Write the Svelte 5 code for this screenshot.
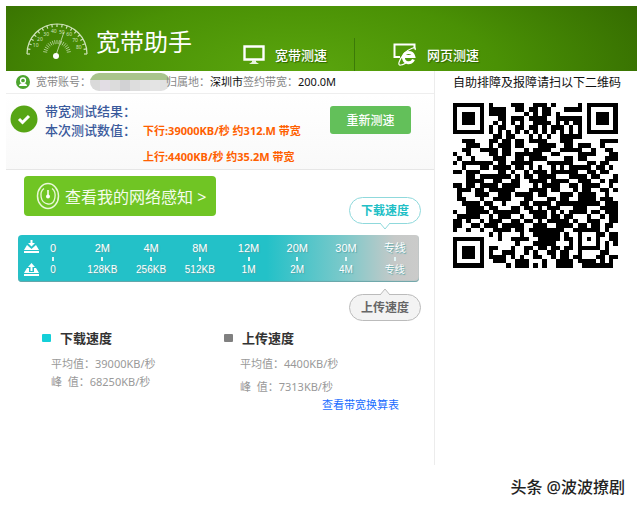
<script>
  const scale = [
    { down: "0", up: "0" },
    { down: "2M", up: "128KB" },
    { down: "4M", up: "256KB" },
    { down: "8M", up: "512KB" },
    { down: "12M", up: "1M" },
    { down: "20M", up: "2M" },
    { down: "30M", up: "4M" },
    { down: "专线", up: "专线" },
  ];

  const mosaic = ["#dadada", "#e2dde4", "#dcdcdc", "#d2d2d4", "#dddddd", "#e2e2e2", "#e4e4e4", "#e1e1e1"];

  const gaugeTicks = Array.from({ length: 19 }, (_, i) => i * 10);
  const innerTicks = Array.from({ length: 17 }, (_, i) => 10 + i * 10);
  const gaugeNumbers = [10, 20, 30, 40, 50, 60, 70, 80];

  function polar(deg, r) {
    const a = (deg * Math.PI) / 180;
    return [32 - Math.cos(a) * r, 32 - Math.sin(a) * r];
  }

  const qrRows = [
    "1111111010000111001110100000101111111",
    "1000001011110011011011000111101000001",
    "1011101011110000101011010000001011101",
    "1011101000110111011110011111101011101",
    "1011101001010101001111010101101011101",
    "1000001010110011011010111010101000001",
    "1111111010101010101010101010101111111",
    "0000000001101100010101001111100000000",
    "0011100011011011011110001110000001111",
    "0001110010111011000111100110111001000",
    "0011001111011000101111001111100100110",
    "1001000011011011111100110000111100011",
    "0100100001110011011110000110110000111",
    "1011111110110111110001111110001101100",
    "0010001101111011010100101011111011010",
    "1101110000110100101110111111001101100",
    "0001101111111010110111100011110110001",
    "0001111001100110011110111100111001011",
    "1101101111011110001011110011011110010",
    "0111011011111100011110110001011001101",
    "0100011100111011110110001110111100100",
    "0110001001111000110001101100111101110",
    "0011110110010001101111011111111110111",
    "0001111011000110110101110001110001111",
    "1001111101111110011110101011110110111",
    "0111110010111001001110110110001001011",
    "1101001011100110110101111101001110011",
    "1100110111011111001110011110110110110",
    "1001001001111011011111111001111110100",
    "0000000010100001001111110100100011011",
    "1111111000100111100111110110101010011",
    "1000001000000010001111100010100010101",
    "1011101011000100110110110110111110100",
    "1011101010011100101001101100100001100",
    "1011101011110101001100101101100011011",
    "1000001001110011100010011110111101010",
    "1111111000001011101010011110011111110",
  ];
  const qrPath = qrRows
    .map((row, y) => [...row].map((c, x) => (c === "1" ? `M${x} ${y}h1v1h-1z` : "")).join(""))
    .join("");
</script>

<div class="page">
  <header>
    <svg class="gauge" viewBox="0 0 64 38" aria-hidden="true">
      <path d="M2 32A30 30 0 0 1 62 32" fill="none" stroke="#cfe3bb" stroke-width="1.2" />
      {#each gaugeTicks as deg}
        {@const a = polar(deg, 30)}
        {@const b = polar(deg, 27)}
        <line x1={a[0]} y1={a[1]} x2={b[0]} y2={b[1]} stroke="#cfe3bb" stroke-width="1.2" />
      {/each}
      {#each innerTicks as deg}
        {@const a = polar(deg, 14)}
        {@const b = polar(deg, 10)}
        <line x1={a[0]} y1={a[1]} x2={b[0]} y2={b[1]} stroke="#c3dbad" stroke-width="0.8" />
      {/each}
      {#each gaugeNumbers as n}
        {@const p = polar(n * 2 + 2, 23)}
        <text x={p[0]} y={p[1] + 2} text-anchor="middle" font-size="5" fill="#cfe3bb">{n}</text>
      {/each}
      <path d="M31 33L39 10" stroke="#cfe3bb" stroke-width="0.8" />
      <circle cx="31" cy="34" r="3" fill="#fff" />
    </svg>
    <h1>宽带助手</h1>
    <nav>
      <a href="#broadband">
        <svg width="22" height="20" viewBox="0 0 22 20" aria-hidden="true">
          <path d="M1.5 1.5h19v13h-19z" fill="none" stroke="#fff" stroke-width="2.4" />
          <path d="M9 15h4v2l3 2H6l3-2z" fill="#e8f3df" />
        </svg>
        宽带测速
      </a>
      <a href="#web">
        <svg width="24" height="23" viewBox="0 0 24 23" aria-hidden="true">
          <path d="M7 14H1.500V1.500h20V5" fill="none" stroke="#fff" stroke-width="2" />
          <path d="M20.500 13.500H10.500a5.300 5.300 0 0 1 10.300 0zM10.500 14a5.200 5.200 0 0 0 10 2.500" fill="none" stroke="#fff" stroke-width="3" />
          <path d="M22 7c2-4-6-2-11 4S4 23 8 22c2 0 3-1 5-2" fill="none" stroke="#fff" stroke-width="1.200" />
        </svg>
        网页测速
      </a>
    </nav>
  </header>

  <div class="body">
    <main>
      <div class="account">
        <svg width="14" height="14" viewBox="0 0 14 14" aria-hidden="true">
          <circle cx="7" cy="7" r="7" fill="#4da52f" />
          <circle cx="7" cy="5.500" r="2.500" fill="none" stroke="#fff" stroke-width="1.300" />
          <path d="M3 11c0-2 2-3 4-3s4 1 4 3z" fill="#fff" />
        </svg>
        <span class="label">宽带账号：</span>
        <svg class="mask" width="80" height="18" viewBox="0 0 80 18" aria-hidden="true">
          <clipPath id="pill"><rect width="80" height="18" rx="9" /></clipPath>
          <g clip-path="url(#pill)">
            {#each mosaic as color, i}
              <rect x={i * 10} y="6" width="10" height="12" fill={color} />
            {/each}
            <rect width="80" height="7" fill="#a9c48c" />
          </g>
        </svg>
        <span class="label">归属地：</span>
        <span>深圳市</span>
        <span class="label">签约带宽：</span>
        <span>200.0M</span>
      </div>

      <section class="result">
        <svg width="28" height="28" viewBox="0 0 28 28" aria-hidden="true">
          <circle cx="14" cy="14" r="13.500" fill="#57a515" />
          <path d="M9 14l3.500 3.500L19 11" fill="none" stroke="#fff" stroke-width="3" />
        </svg>
        <div class="titles">
          <p>带宽测试结果：</p>
          <p>本次测试数值：</p>
        </div>
        <div class="values">
          <p>下行:39000KB/秒 约312.M 带宽</p>
          <p>上行:4400KB/秒 约35.2M 带宽</p>
        </div>
        <button class="retest">重新测速</button>
      </section>

      <section class="speed">
        <div class="top">
          <button class="network">
            <svg width="24" height="28" viewBox="0 0 24 28" aria-hidden="true">
              <ellipse cx="12" cy="14" rx="10.500" ry="12.500" fill="none" stroke="#e9f8d9" stroke-width="1.500" />
              <path d="M8 6.500C3 10 4 21 12 22S21 10 16 6.500" fill="none" stroke="#e9f8d9" stroke-width="1.300" />
              <path d="M12 8v6" stroke="#fff" stroke-width="1.500" />
              <circle cx="12" cy="14.500" r="2" fill="#fff" />
            </svg>
            查看我的网络感知 &gt;
          </button>
          <div class="bubble down">
            <span>下载速度</span>
            <svg width="10" height="7" viewBox="0 0 10 7" aria-hidden="true">
              <path d="M0 0L5 6L10 0" fill="#fff" stroke="#8fd9dc" />
            </svg>
          </div>
        </div>

        <div class="bar">
          <div class="icons">
            <svg width="15" height="13" viewBox="0 0 15 13" aria-hidden="true">
              <path d="M6.500 0h2v3H11L7.500 6.500 4 3h2.500zM3 5L0 10h15L12 5l-4.500 4zM0 11h15v2H0z" fill="#fff" />
            </svg>
            <svg width="15" height="13" viewBox="0 0 15 13" aria-hidden="true">
              <path d="M7.500 0L11 4H8.500v4h-2V4H4zM3 5L0 10h15l-3-5h-2v4H5V5zM0 11h15v2H0z" fill="#fff" />
            </svg>
          </div>
          {#each scale as step}
            <div class="step">
              <span>{step.down}</span>
              <i></i>
              <span class="rate">{step.up}</span>
            </div>
          {/each}
        </div>

        <div class="bubble up">
          <svg width="10" height="7" viewBox="0 0 10 7" aria-hidden="true">
            <path d="M0 7L5 1L10 7" fill="#f3f3f3" stroke="#bbb" />
          </svg>
          <span>上传速度</span>
        </div>
      </section>

      <section class="stats">
        <div class="stat">
          <h2>下载速度</h2>
          <p>平均值：39000KB/秒</p>
          <p>峰&nbsp; 值：68250KB/秒</p>
        </div>
        <div class="stat upload">
          <h2>上传速度</h2>
          <p>平均值：4400KB/秒</p>
          <p>峰&nbsp; 值：7313KB/秒</p>
          <a href="#table">查看带宽换算表</a>
        </div>
      </section>
    </main>

    <aside>
      <p>自助排障及报障请扫以下二维码</p>
      <svg class="qr" viewBox="0 0 37 37" role="img" aria-label="二维码">
        <path d={qrPath} shape-rendering="crispEdges" />
      </svg>
    </aside>
  </div>

  <footer>头条 @波波撩剧</footer>
</div>

<style>
  :global(body) {
    background: #fff;
  }

  .page {
    padding: 6px 3px 0 6px;
    font-family: "Noto Sans", "Noto Sans CJK SC", sans-serif;
    font-size: 11px;
    line-height: 18px;
    color: #111;
  }

  h1,
  h2,
  p {
    margin: 0;
  }

  button {
    border: none;
    padding: 0;
    font-family: inherit;
    cursor: pointer;
  }

  header {
    display: flex;
    height: 65px;
    background: radial-gradient(ellipse 64% 240% at 46% 105%, #5ba60e 0%, #4a9105 50%, #326700 100%);
    color: #fff;
  }

  .gauge {
    width: 64px;
    height: 38px;
    margin: 16px 0 0 19px;
  }

  h1 {
    margin: 17px 0 0 7px;
    font-size: 24px;
    font-weight: 400;
    line-height: 38px;
  }

  nav {
    display: flex;
    align-items: flex-end;
    margin-left: 51px;
  }

  nav a {
    display: flex;
    align-items: center;
    gap: 10px;
    height: 33px;
    color: #fff;
    font-size: 13px;
    font-weight: 500;
    text-decoration: none;
    text-shadow: 1px 1px 1px #2d6400;
  }

  nav a + a {
    margin-left: 27px;
    padding-left: 38px;
    border-left: 1px solid #3c7a08;
  }

  .body {
    display: flex;
  }

  main {
    flex: none;
    width: 68%;
    box-sizing: border-box;
    border-right: 1px solid #ececec;
    padding-bottom: 51px;
  }

  .account {
    display: flex;
    align-items: center;
    height: 22px;
    padding-left: 10px;
    border-bottom: 1px solid #eee;
    white-space: nowrap;
  }

  .label {
    color: #888;
  }

  .account > .label:first-of-type {
    width: 54px;
    margin-left: 6px;
  }

  .mask {
    margin-right: -4px;
  }

  .result {
    display: flex;
    height: 75px;
    padding: 0 23px 0 4px;
    border-bottom: 1px solid #e6e6e6;
    background: linear-gradient(#fff, #f9f9f9);
  }

  .result > svg {
    margin-top: 11px;
  }

  .titles {
    width: 98px;
    padding: 8px 0 0 7px;
    color: #3a5a9c;
    font-size: 13px;
    font-weight: 500;
    line-height: 19px;
    white-space: nowrap;
  }

  .values {
    padding-top: 24px;
    color: #ff6000;
    font-weight: 700;
    line-height: 26px;
    white-space: nowrap;
  }

  .retest {
    width: 81px;
    height: 28px;
    margin: 12px 0 0 auto;
    border-radius: 3px;
    background: #63c05a;
    color: #fff;
    font-size: 12px;
    font-weight: 500;
  }

  .speed {
    padding: 6px 15px 0 12px;
  }

  .top {
    display: flex;
    justify-content: space-between;
    align-items: flex-end;
    height: 54px;
    margin-bottom: 5px;
  }

  .network {
    display: flex;
    align-items: center;
    align-self: flex-start;
    gap: 5px;
    height: 40px;
    margin-left: 6px;
    padding: 0 10px 0 12px;
    border-radius: 4px;
    background: #70c524;
    color: #f4fcec;
    font-size: 16px;
  }

  .bubble {
    display: flex;
    flex-direction: column;
    align-items: center;
    width: 72px;
    margin-right: -2px;
    font-size: 12px;
    font-weight: 700;
  }

  .bubble span {
    width: 100%;
    box-sizing: border-box;
    border: 1px solid #8fd9dc;
    border-radius: 14px;
    color: #22bfc6;
    line-height: 25px;
    text-align: center;
  }

  .bubble svg {
    position: relative;
    z-index: 1;
    margin-top: -1px;
  }

  .bar {
    display: grid;
    grid-template-columns: 22px 38px repeat(7, 1fr);
    height: 47px;
    border-radius: 4px;
    background: linear-gradient(to right, #23c1c8 62%, #7fc9ca 82%, #c6c9c8 94%, #cbcbca);
    box-shadow: inset 0 -1px 1px #6aa5a8;
    color: #fff;
    font-family: "Liberation Sans", "Noto Sans CJK SC", sans-serif;
    text-shadow: 1px 1px 1px #55a5a8;
  }

  .icons {
    display: flex;
    flex-direction: column;
    gap: 10px;
    padding: 5px 0 0 6px;
  }

  .step {
    display: grid;
    grid-template-rows: 18px 4px 18px;
    justify-items: center;
    padding-top: 4px;
    line-height: 18px;
  }

  .step:nth-child(2) {
    padding-right: 12px;
  }

  .step i {
    width: 2px;
    background: #e0f5f5;
  }

  .rate {
    font-size: 10px;
  }

  .up {
    margin: 6px -2px 0 auto;
  }

  .up span {
    border-color: #bbb;
    background: #f3f3f3;
    color: #666;
  }

  .up svg {
    margin: 0 0 -1px;
  }

  .stats {
    display: flex;
    padding: 7px 0 0 36px;
    color: #999;
  }

  .stat {
    width: 182px;
  }

  h2 {
    display: flex;
    align-items: center;
    gap: 9px;
    margin-bottom: 7px;
    color: #333;
    font-size: 13px;
    font-weight: 700;
    line-height: 20px;
  }

  h2::before {
    content: "";
    width: 9px;
    height: 8px;
    border-radius: 1px;
    background: #14cfd8;
  }

  .stat p {
    padding-left: 9px;
  }

  .upload h2::before {
    background: #808080;
  }

  .upload p {
    padding-left: 16px;
  }

  .upload p + p {
    margin-top: 5px;
  }

  .stat a {
    display: block;
    margin-left: 98px;
    color: #1a6dff;
    text-decoration: none;
    white-space: nowrap;
  }

  aside {
    flex: 1;
    min-width: 0;
    padding: 3px 19px 0 18px;
  }

  aside p {
    font-size: 12px;
    white-space: nowrap;
  }

  .qr {
    display: block;
    width: 100%;
    margin-top: 11px;
  }

  footer {
    padding: 10px 12px 0 0;
    color: #222;
    font-size: 16px;
    font-weight: 500;
    line-height: 24px;
    text-align: right;
  }
</style>
